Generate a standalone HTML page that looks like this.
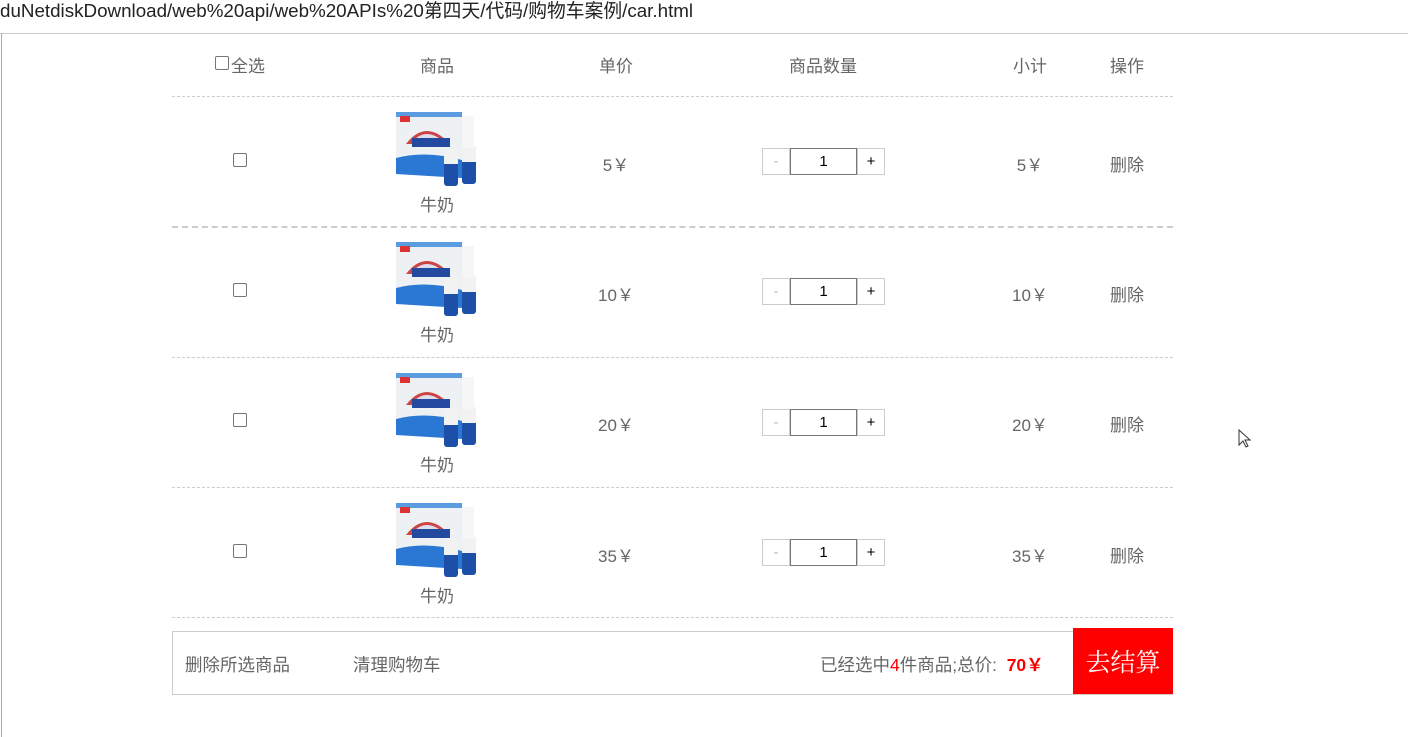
<!DOCTYPE html>
<html><head><meta charset="utf-8"><style>
body{margin:0;width:1408px;height:737px;background:#fff;position:relative;overflow:hidden;font-family:"Liberation Sans","Microsoft YaHei","Noto Sans CJK SC",sans-serif;color:#666;font-size:17px}
.a{position:absolute;white-space:nowrap}
.c{transform:translateX(-50%)}
.cb{position:absolute;width:12px;height:12px;border:1px solid #767676;border-radius:2px;background:#fff}
.line{position:absolute;left:172px;width:1001px;border-top:1px dashed #ccc}
.q{position:absolute;height:25px;border:1px solid #ccc;background:#fff;text-align:center;line-height:25px;font-size:15px;color:#000}
</style></head><body>
<div class="a" style="left:0;top:0;font-size:18.8px;color:#222;line-height:22px">duNetdiskDownload/web%20api/web%20APIs%20第四天/代码/购物车案例/car.html</div>
<div class="a" style="left:0;top:33px;width:1408px;border-top:1px solid #ccc"></div>
<div class="a" style="left:1px;top:33px;height:704px;border-left:1px solid #aaa"></div>

<div class="cb" style="left:215px;top:56px"></div>
<div class="a" style="left:231px;top:52px">全选</div>
<div class="a c" style="left:437px;top:52px">商品</div>
<div class="a c" style="left:616px;top:52px">单价</div>
<div class="a c" style="left:823px;top:52px">商品数量</div>
<div class="a c" style="left:1030px;top:52px">小计</div>
<div class="a c" style="left:1127px;top:52px">操作</div>
<div class="line" style="top:96px"></div>

<div class="cb" style="left:233px;top:153px"></div>
<svg class="a" style="left:396px;top:112px" width="86" height="74" viewBox="0 0 86 74"><rect x="0" y="4" width="66" height="58" fill="#eef1f4"/><rect x="0" y="0" width="66" height="5" fill="#5b9be0"/><path d="M0 46 Q30 38 66 48 L66 66 L0 62Z" fill="#2a78d4"/><path d="M10 32 Q30 6 54 32Z" fill="#c44"/><path d="M16 30 Q30 14 48 30Z" fill="#dde"/><rect x="16" y="26" width="38" height="9" fill="#234a9e"/><rect x="4" y="4" width="10" height="6" fill="#d33"/><rect x="48" y="40" width="14" height="34" rx="3" fill="#1d4fa8"/><rect x="66" y="38" width="14" height="34" rx="3" fill="#1d4fa8"/><rect x="48" y="36" width="14" height="16" fill="#f2f2f2"/><rect x="66" y="34" width="14" height="16" fill="#f2f2f2"/><rect x="66" y="4" width="12" height="32" fill="#f4f6f8"/></svg>
<div class="a c" style="left:437px;top:191px">牛奶</div>
<div class="a c" style="left:616px;top:151px">5￥</div>
<div class="q" style="left:762px;top:148px;width:26px;color:#bbb">-</div>
<div class="q" style="left:790px;top:148px;width:65px;border-color:#767676">1</div>
<div class="q" style="left:857px;top:148px;width:26px">+</div>
<div class="a c" style="left:1030px;top:151px">5￥</div>
<div class="a c" style="left:1127px;top:151px">删除</div>
<div class="line" style="top:226px;border-top:2px dashed #ccc"></div>

<div class="cb" style="left:233px;top:283px"></div>
<svg class="a" style="left:396px;top:242px" width="86" height="74" viewBox="0 0 86 74"><rect x="0" y="4" width="66" height="58" fill="#eef1f4"/><rect x="0" y="0" width="66" height="5" fill="#5b9be0"/><path d="M0 46 Q30 38 66 48 L66 66 L0 62Z" fill="#2a78d4"/><path d="M10 32 Q30 6 54 32Z" fill="#c44"/><path d="M16 30 Q30 14 48 30Z" fill="#dde"/><rect x="16" y="26" width="38" height="9" fill="#234a9e"/><rect x="4" y="4" width="10" height="6" fill="#d33"/><rect x="48" y="40" width="14" height="34" rx="3" fill="#1d4fa8"/><rect x="66" y="38" width="14" height="34" rx="3" fill="#1d4fa8"/><rect x="48" y="36" width="14" height="16" fill="#f2f2f2"/><rect x="66" y="34" width="14" height="16" fill="#f2f2f2"/><rect x="66" y="4" width="12" height="32" fill="#f4f6f8"/></svg>
<div class="a c" style="left:437px;top:321px">牛奶</div>
<div class="a c" style="left:616px;top:281px">10￥</div>
<div class="q" style="left:762px;top:278px;width:26px;color:#bbb">-</div>
<div class="q" style="left:790px;top:278px;width:65px;border-color:#767676">1</div>
<div class="q" style="left:857px;top:278px;width:26px">+</div>
<div class="a c" style="left:1030px;top:281px">10￥</div>
<div class="a c" style="left:1127px;top:281px">删除</div>
<div class="line" style="top:357px"></div>

<div class="cb" style="left:233px;top:413px"></div>
<svg class="a" style="left:396px;top:373px" width="86" height="74" viewBox="0 0 86 74"><rect x="0" y="4" width="66" height="58" fill="#eef1f4"/><rect x="0" y="0" width="66" height="5" fill="#5b9be0"/><path d="M0 46 Q30 38 66 48 L66 66 L0 62Z" fill="#2a78d4"/><path d="M10 32 Q30 6 54 32Z" fill="#c44"/><path d="M16 30 Q30 14 48 30Z" fill="#dde"/><rect x="16" y="26" width="38" height="9" fill="#234a9e"/><rect x="4" y="4" width="10" height="6" fill="#d33"/><rect x="48" y="40" width="14" height="34" rx="3" fill="#1d4fa8"/><rect x="66" y="38" width="14" height="34" rx="3" fill="#1d4fa8"/><rect x="48" y="36" width="14" height="16" fill="#f2f2f2"/><rect x="66" y="34" width="14" height="16" fill="#f2f2f2"/><rect x="66" y="4" width="12" height="32" fill="#f4f6f8"/></svg>
<div class="a c" style="left:437px;top:451px">牛奶</div>
<div class="a c" style="left:616px;top:411px">20￥</div>
<div class="q" style="left:762px;top:409px;width:26px;color:#bbb">-</div>
<div class="q" style="left:790px;top:409px;width:65px;border-color:#767676">1</div>
<div class="q" style="left:857px;top:409px;width:26px">+</div>
<div class="a c" style="left:1030px;top:411px">20￥</div>
<div class="a c" style="left:1127px;top:411px">删除</div>
<div class="line" style="top:487px"></div>

<div class="cb" style="left:233px;top:544px"></div>
<svg class="a" style="left:396px;top:503px" width="86" height="74" viewBox="0 0 86 74"><rect x="0" y="4" width="66" height="58" fill="#eef1f4"/><rect x="0" y="0" width="66" height="5" fill="#5b9be0"/><path d="M0 46 Q30 38 66 48 L66 66 L0 62Z" fill="#2a78d4"/><path d="M10 32 Q30 6 54 32Z" fill="#c44"/><path d="M16 30 Q30 14 48 30Z" fill="#dde"/><rect x="16" y="26" width="38" height="9" fill="#234a9e"/><rect x="4" y="4" width="10" height="6" fill="#d33"/><rect x="48" y="40" width="14" height="34" rx="3" fill="#1d4fa8"/><rect x="66" y="38" width="14" height="34" rx="3" fill="#1d4fa8"/><rect x="48" y="36" width="14" height="16" fill="#f2f2f2"/><rect x="66" y="34" width="14" height="16" fill="#f2f2f2"/><rect x="66" y="4" width="12" height="32" fill="#f4f6f8"/></svg>
<div class="a c" style="left:437px;top:582px">牛奶</div>
<div class="a c" style="left:616px;top:542px">35￥</div>
<div class="q" style="left:762px;top:539px;width:26px;color:#bbb">-</div>
<div class="q" style="left:790px;top:539px;width:65px;border-color:#767676">1</div>
<div class="q" style="left:857px;top:539px;width:26px">+</div>
<div class="a c" style="left:1030px;top:542px">35￥</div>
<div class="a c" style="left:1127px;top:542px">删除</div>
<div class="line" style="top:617px"></div>

<div class="a" style="left:172px;top:631px;width:999px;height:62px;border:1px solid #ccc"></div>
<div class="a" style="left:185px;top:652px;font-size:17.5px">删除所选商品</div>
<div class="a" style="left:353px;top:652px;font-size:17.5px">清理购物车</div>
<div class="a" style="left:820px;top:652px;font-size:17.5px">已经选中<span style="color:red">4</span>件商品;总价:&nbsp; <b style="color:red">70￥</b></div>
<div class="a" style="left:1073px;top:628px;width:100px;height:66px;background:#f00;color:#fff;font-size:25px;line-height:66px;text-align:center;font-family:'Noto Serif CJK SC',serif">去结算</div>
<svg class="a" style="left:1238px;top:429px" width="14" height="20"><path d="M1 1 L1 16 L5 12 L8 18 L10 17 L7 11 L12 11 Z" fill="#fff" stroke="#333"/></svg>
</body></html>
